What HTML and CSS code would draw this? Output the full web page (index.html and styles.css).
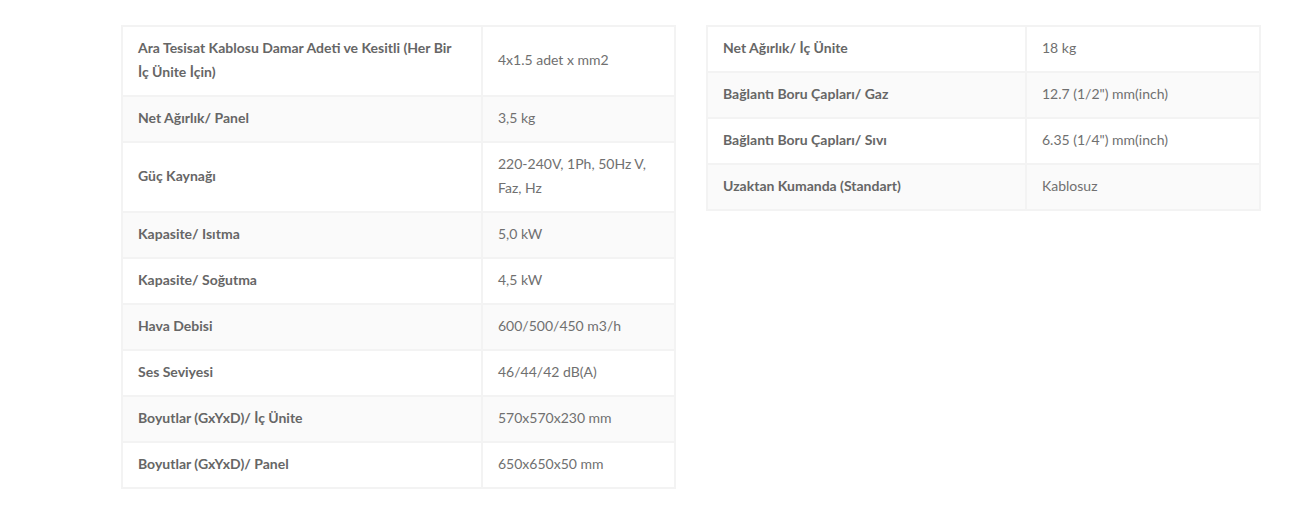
FILE: index.html
```html
<!DOCTYPE html>
<html lang="tr">
<head>
<meta charset="utf-8">
<title>Teknik Özellikler</title>
<link rel="stylesheet" href="styles.css">
</head>
<body>
<div class="specs">
  <table class="spec-table">
    <tbody>
      <tr><th>Ara Tesisat Kablosu Damar Adeti ve Kesitli (Her Bir İç Ünite İçin)</th><td>4x1.5 adet x mm2</td></tr>
      <tr><th>Net Ağırlık/ Panel</th><td>3,5 kg</td></tr>
      <tr><th>Güç Kaynağı</th><td>220-240V, 1Ph, 50Hz V, Faz, Hz</td></tr>
      <tr><th>Kapasite/ Isıtma</th><td>5,0 kW</td></tr>
      <tr><th>Kapasite/ Soğutma</th><td>4,5 kW</td></tr>
      <tr><th>Hava Debisi</th><td>600/500/450 m3/h</td></tr>
      <tr><th>Ses Seviyesi</th><td>46/44/42 dB(A)</td></tr>
      <tr><th>Boyutlar (GxYxD)/ İç Ünite</th><td>570x570x230 mm</td></tr>
      <tr><th>Boyutlar (GxYxD)/ Panel</th><td>650x650x50 mm</td></tr>
    </tbody>
  </table>
  <table class="spec-table spec-table--right">
    <tbody>
      <tr><th>Net Ağırlık/ İç Ünite</th><td>18 kg</td></tr>
      <tr><th>Bağlantı Boru Çapları/ Gaz</th><td>12.7 (1/2") mm(inch)</td></tr>
      <tr><th>Bağlantı Boru Çapları/ Sıvı</th><td>6.35 (1/4") mm(inch)</td></tr>
      <tr><th>Uzaktan Kumanda (Standart)</th><td>Kablosuz</td></tr>
    </tbody>
  </table>
</div>
</body>
</html>
```

FILE: styles.css
```css
html, body {
  margin: 0;
  padding: 0;
  background: #fff;
}

body {
  font-family: Lato, "Open Sans", "Liberation Sans", sans-serif;
  font-size: 14px;
  line-height: 24px;
  color: #6f6f6f;
}

.specs {
  display: flex;
  align-items: flex-start;
  gap: 30px;
  padding: 25px 0 0 121px;
}

.spec-table {
  width: 555px;
  border-collapse: collapse;
  table-layout: fixed;
  border: 2px solid #f3f3f3;
}

.spec-table th,
.spec-table td {
  border: 2px solid #f3f3f3;
  padding: 9px 15px 11px;
  text-align: left;
  vertical-align: middle;
}

.spec-table th {
  width: 317px;
  padding-right: 26px;
  font-weight: 700;
  color: #666;
}

.spec-table td {
  font-weight: 400;
  color: #707070;
}

.spec-table--right th {
  width: 276px;
}

.spec-table tr:nth-child(even) th,
.spec-table tr:nth-child(even) td {
  background: #fafafa;
}
```
